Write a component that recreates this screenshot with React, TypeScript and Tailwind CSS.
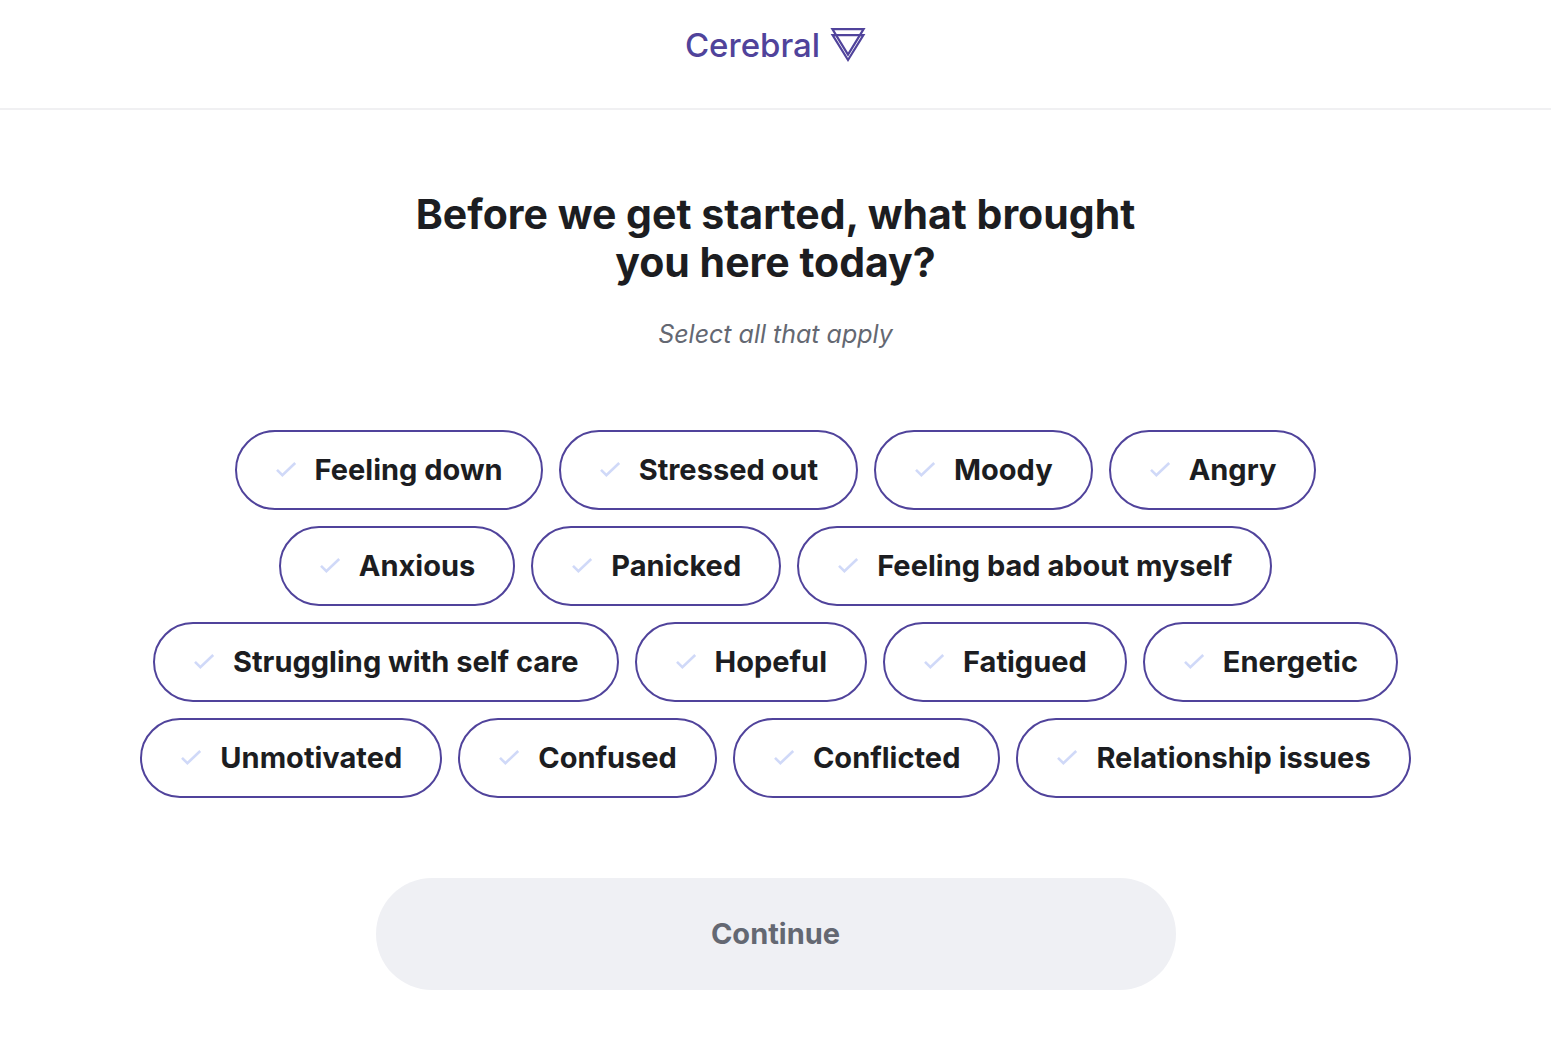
import React, { FC, useState } from "react";

const REASONS = [
  "Feeling down",
  "Stressed out",
  "Moody",
  "Angry",
  "Anxious",
  "Panicked",
  "Feeling bad about myself",
  "Struggling with self care",
  "Hopeful",
  "Fatigued",
  "Energetic",
  "Unmotivated",
  "Confused",
  "Conflicted",
  "Relationship issues",
];

const Logo: FC = () => {
  return (
    <a href="#" className="flex items-center gap-[10px] text-[#50439b]">
      <span className="text-[33px] leading-9 font-medium">Cerebral</span>
      <svg
        viewBox="0 0 36 36"
        className="h-9 w-9"
        fill="none"
        stroke="currentColor"
        strokeWidth="2.2"
        aria-hidden="true"
      >
        <path d="M2.4 2.2H33.6L18 27.6Z" />
        <path d="M2.6 8.2H33.4L18 33Z" />
      </svg>
    </a>
  );
};

interface PillProps {
  label: string;
  checked: boolean;
  onToggle: () => void;
}

const ReasonPill: FC<PillProps> = ({ label, checked, onToggle }) => {
  return (
    <label className="relative flex h-20 cursor-pointer items-center gap-[18px] rounded-full border-2 border-[#50439b] px-[38px] text-[29px] leading-9 font-bold text-[#1c1d21] has-checked:bg-[#eef0fb]">
      <input
        type="checkbox"
        checked={checked}
        onChange={onToggle}
        className="peer sr-only"
      />
      <svg
        viewBox="0 0 22 22"
        className="h-[22px] w-[22px] text-[#d0d9f8] peer-checked:text-[#50439b]"
        fill="none"
        stroke="currentColor"
        strokeWidth="2.6"
        aria-hidden="true"
      >
        <path d="M2 10.8L7.4 16.2L20.2 4" />
      </svg>
      <span>{label}</span>
    </label>
  );
};

export default function App() {
  const [selected, setSelected] = useState<string[]>([]);

  const toggle = (reason: string) => {
    setSelected((prev) =>
      prev.includes(reason)
        ? prev.filter((r) => r !== reason)
        : [...prev, reason]
    );
  };

  return (
    <div className="min-h-screen bg-white font-[Inter,sans-serif]">
      <header className="flex justify-center border-b-2 border-[#f0f0f2] pt-[27px] pb-[45px]">
        <Logo />
      </header>
      <main className="flex flex-col items-center px-4 py-20">
        <h1 className="max-w-[800px] text-center text-[41px] leading-[48px] font-bold text-[#1c1d21]">
          Before we get started, what brought you here today?
        </h1>
        <p className="mt-[30px] text-[25px] leading-9 text-[#646872] italic">
          Select all that apply
        </p>
        <div className="mt-[78px] flex max-w-7xl flex-wrap justify-center gap-4">
          {REASONS.map((reason) => (
            <ReasonPill
              key={reason}
              label={reason}
              checked={selected.includes(reason)}
              onToggle={() => toggle(reason)}
            />
          ))}
        </div>
        <button
          type="button"
          disabled={selected.length === 0}
          className="mt-20 h-28 w-full max-w-[800px] rounded-full bg-[#50439b] text-[29px] font-bold text-white disabled:bg-[#eff0f4] disabled:text-[#646872]"
        >
          Continue
        </button>
      </main>
    </div>
  );
}
